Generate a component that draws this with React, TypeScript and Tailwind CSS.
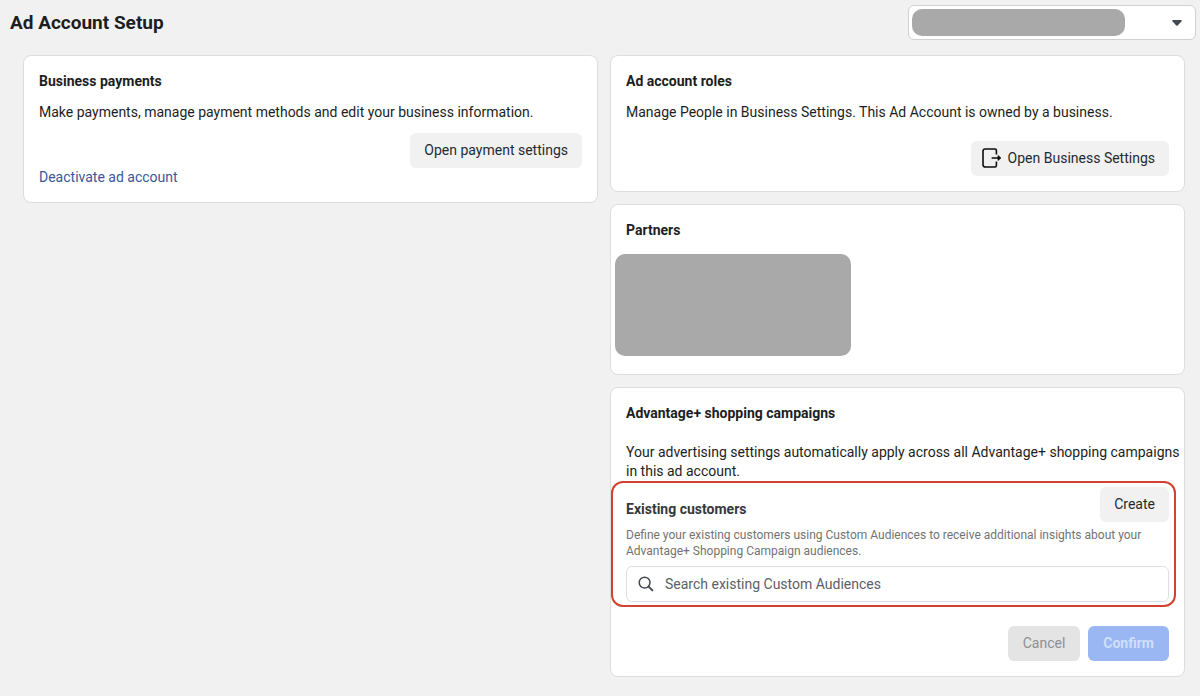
import { useState } from 'react'
import type { ButtonHTMLAttributes, ReactNode } from 'react'
import clsx from 'clsx'

// --- Icons ---

function ExitIcon() {
  return (
    <svg width="20" height="20" viewBox="0 0 20 20" fill="none" stroke="#0c0d0e" strokeWidth="1.6" aria-hidden="true">
      <path d="M14.4 6.6V2.4a1.4 1.4 0 0 0-1.4-1.4H3.2a2.2 2.2 0 0 0-2.2 2.2v13.6A2.2 2.2 0 0 0 3.2 19H13a1.4 1.4 0 0 0 1.4-1.4v-4.2" />
      <path d="M10.2 10h6.4" strokeLinecap="round" />
      <path d="M16 7.6l2.9 2.4-2.9 2.4z" fill="#0c0d0e" strokeWidth="0.8" strokeLinejoin="round" />
    </svg>
  )
}

function SearchIcon() {
  return (
    <svg width="16" height="16" viewBox="0 0 16 16" fill="none" stroke="#444950" aria-hidden="true">
      <circle cx="6.6" cy="6.6" r="5.4" strokeWidth="1.5" />
      <path d="M10.6 10.6l3.8 3.8" strokeWidth="2" strokeLinecap="round" />
    </svg>
  )
}

function CaretIcon() {
  return (
    <svg width="10" height="6" viewBox="0 0 10 6" fill="#444950" aria-hidden="true">
      <path d="M1 0h8a.8.8 0 0 1 .6 1.3L5.7 5.5a1 1 0 0 1-1.4 0L.4 1.3A.8.8 0 0 1 1 0z" />
    </svg>
  )
}

// --- Sub-components ---

function Card({ title, children }: { title: string; children: ReactNode }) {
  return (
    <section className="flex flex-col rounded-lg border border-[#dcdddf] bg-white p-[15px]">
      <h2 className="text-sm leading-5 font-bold text-[#1c1e21]">{title}</h2>
      {children}
    </section>
  )
}

type ButtonProps = ButtonHTMLAttributes<HTMLButtonElement> & {
  variant?: 'default' | 'muted' | 'primary'
}

function Button({ variant = 'default', className, children, ...props }: ButtonProps) {
  return (
    <button
      type="button"
      className={clsx(
        'flex h-[35px] shrink-0 items-center rounded-md pb-px text-sm',
        variant === 'default' && 'bg-[#f1f1f1] px-[14px] text-[#1c2b33]',
        variant === 'muted' && 'bg-[#e4e4e4] px-[15px] text-[#8d8f91]',
        variant === 'primary' && 'bg-[#9ab7f4] px-[15px] font-bold text-[#d1dffa]',
        className,
      )}
      {...props}
    >
      {children}
    </button>
  )
}

function AccountSelect() {
  return (
    <div className="relative w-[288px]">
      <select
        aria-label="Ad account"
        className="h-[35px] w-full appearance-none rounded-md border border-[#cfd1d4] bg-white px-4 text-sm"
      >
        <option value="" />
      </select>
      <span className="pointer-events-none absolute top-1 left-1 h-[27px] w-[213px] rounded-[10px] bg-[#a9a9a9]" />
      <span className="pointer-events-none absolute top-[15px] right-[14px]">
        <CaretIcon />
      </span>
    </div>
  )
}

// --- Main component ---

export default function App() {
  const [query, setQuery] = useState('')

  return (
    <div className="min-h-screen bg-[#f1f1f1] pb-5 font-[Roboto,sans-serif] text-sm leading-[19px] text-[#1c1e21]">
      <header className="flex items-center justify-between pt-[5px] pr-1 pb-[15px] pl-[10px]">
        <h1 className="text-[19px] leading-6 font-bold">Ad Account Setup</h1>
        <AccountSelect />
      </header>

      <main className="grid grid-cols-2 items-start gap-3 pr-[15px] pl-[23px]">
        <Card title="Business payments">
          <p className="mt-3">Make payments, manage payment methods and edit your business information.</p>
          <Button className="mt-[11px] self-end">Open payment settings</Button>
          <a href="#deactivate" className="self-start text-[#385898]">
            Deactivate ad account
          </a>
        </Card>

        <div className="flex flex-col gap-3">
          <Card title="Ad account roles">
            <p className="mt-3">Manage People in Business Settings. This Ad Account is owned by a business.</p>
            <Button className="mt-[19px] gap-[6px] self-end pl-[11px]">
              <ExitIcon />
              Open Business Settings
            </Button>
          </Card>

          <Card title="Partners">
            <div className="mt-[14px] mb-[3px] -ml-[11px] h-[102px] w-[236px] rounded-[10px] bg-[#a9a9a9]" />
          </Card>

          <Card title="Advantage+ shopping campaigns">
            <p className="mt-5 -mr-3">
              Your advertising settings automatically apply across all Advantage+ shopping campaigns in this ad account.
            </p>

            <div className="-mr-[7px] -ml-[15px] rounded-xl border-2 border-[#d1432f] pt-1 pr-[5px] pb-[3px] pl-[13px]">
              <div className="flex items-start justify-between">
                <h3 className="pt-3 leading-5 font-bold text-[#373839]">
                  <label htmlFor="audiences">Existing customers</label>
                </h3>
                <Button>Create</Button>
              </div>
              <p className="mt-[5px] pr-4 text-xs leading-4 text-[#737373]">
                Define your existing customers using Custom Audiences to receive additional insights about your Advantage+
                Shopping Campaign audiences.
              </p>
              <div className="mt-[7px] flex h-9 items-center gap-[11px] rounded-md border border-[#dddfe2] bg-white px-[11px]">
                <SearchIcon />
                <input
                  id="audiences"
                  type="text"
                  value={query}
                  onChange={(e) => setQuery(e.target.value)}
                  placeholder="Search existing Custom Audiences"
                  className="min-w-0 flex-1 bg-transparent outline-none placeholder:text-[#5b6069]"
                />
              </div>
            </div>

            <div className="mt-[19px] flex justify-end gap-2">
              <Button variant="muted" disabled>
                Cancel
              </Button>
              <Button variant="primary" disabled>
                Confirm
              </Button>
            </div>
          </Card>
        </div>
      </main>
    </div>
  )
}
